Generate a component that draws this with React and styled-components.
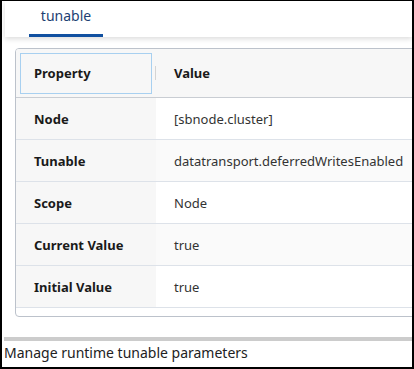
import React from 'react';
import styled, { createGlobalStyle } from 'styled-components';

const GlobalStyle = createGlobalStyle`
  html, body {
    margin: 0;
    padding: 0;
    background: #fff;
  }
  body {
    font-family: "Noto Sans", "Open Sans", sans-serif;
    color: #222;
  }
`;

const Frame = styled.div`
  width: 414px;
  height: 369px;
  box-sizing: border-box;
  border-style: solid;
  border-color: #000;
  border-width: 1px 2px 2px 2px;
  padding-left: 3px;
  display: flex;
  flex-direction: column;
  overflow: hidden;
  background: #fff;
`;

const TabBar = styled.div`
  height: 36px;
  flex-shrink: 0;
  display: flex;
  align-items: stretch;
  padding-left: 24px;
  background: #fff;
  box-shadow: 0 2px 5px rgba(0, 0, 0, 0.14);
  position: relative;
  z-index: 1;
`;

const Tab = styled.div`
  width: 74px;
  box-sizing: border-box;
  display: flex;
  justify-content: center;
  padding-top: 5px;
  font-size: 14px;
  color: #1d3f73;
  border-bottom: 3px solid ${(p) => (p.active ? '#1150a0' : 'transparent')};
`;

const Content = styled.div`
  padding: 11px 0 0 10px;
`;

const Card = styled.div`
  margin-right: -20px;
  border: 1px solid #bcc2cb;
  border-radius: 4px;
  padding-bottom: 8px;
  overflow: hidden;
`;

const Grid = styled.div`
  display: grid;
  grid-template-columns: 140px 1fr;
`;

const HeadCell = styled.div`
  height: 48px;
  display: flex;
  align-items: center;
  padding-left: 18px;
  background: #f7f7f7;
  border-bottom: 1px solid #c9cdd3;
  font-size: 13px;
  font-weight: 700;
  color: #1a1a1a;
  position: relative;
  ${(p) =>
    p.focused &&
    `
    outline: 1px solid #a8d0f0;
    outline-offset: -5px;
    &::after {
      content: '';
      position: absolute;
      right: -1px;
      top: 17px;
      width: 2px;
      height: 14px;
      background: #d4d4d4;
    }
  `}
`;

const LabelCell = styled.div`
  height: 41px;
  display: flex;
  align-items: center;
  padding-left: 18px;
  background: #f7f7f7;
  border-bottom: 1px solid #dde2e9;
  font-size: 13px;
  font-weight: 700;
  color: #1a1a1a;
`;

const ValueCell = styled.div`
  height: 41px;
  display: flex;
  align-items: center;
  padding-left: 18px;
  background: ${(p) => (p.striped ? '#fafafa' : '#fff')};
  border-bottom: 1px solid #dde2e9;
  font-size: 13px;
  color: #333;
  white-space: nowrap;
`;

const Footer = styled.div`
  margin-top: auto;
  margin-left: -1px;
`;

const Divider = styled.div`
  height: 4px;
  background: #cccccc;
`;

const Status = styled.div`
  height: 26px;
  line-height: 24px;
  font-size: 14px;
  color: #222;
`;

const rows = [
  ['Node', '[sbnode.cluster]'],
  ['Tunable', 'datatransport.deferredWritesEnabled'],
  ['Scope', 'Node'],
  ['Current Value', 'true'],
  ['Initial Value', 'true'],
];

const App = () => (
  <>
    <GlobalStyle />
    <Frame>
      <TabBar>
        <Tab active>tunable</Tab>
      </TabBar>
      <Content>
        <Card>
          <Grid>
            <HeadCell focused>Property</HeadCell>
            <HeadCell>Value</HeadCell>
            {rows.map(([label, value], i) => (
              <React.Fragment key={label}>
                <LabelCell>{label}</LabelCell>
                <ValueCell striped={i % 2 === 1}>{value}</ValueCell>
              </React.Fragment>
            ))}
          </Grid>
        </Card>
      </Content>
      <Footer>
        <Divider />
        <Status>Manage runtime tunable parameters</Status>
      </Footer>
    </Frame>
  </>
);

export default App;
